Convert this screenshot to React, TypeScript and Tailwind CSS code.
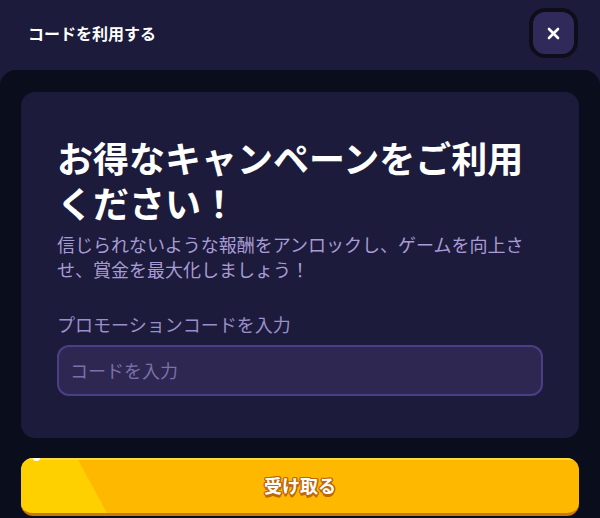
import React from "react";

export default function App() {
  return (
    <div className="w-[600px] h-[518px] bg-[#1c1b3b] flex flex-col overflow-hidden font-['Noto_Sans_CJK_JP','Noto_Sans',sans-serif]">
      <header className="h-[70px] shrink-0 flex items-center justify-between pl-7 pr-[22px] pb-1">
        <h2 className="text-base font-bold text-white leading-none">コードを利用する</h2>
        <button className="w-[49px] h-[50px] rounded-[16px] bg-[#2f2a5a] border-4 border-[#0e0e1a] flex items-center justify-center">
          <svg width="13" height="13" viewBox="0 0 13 13" fill="none">
            <path d="M2 2 L11 11 M11 2 L2 11" stroke="#ffffff" strokeWidth="2.6" strokeLinecap="round" />
          </svg>
        </button>
      </header>
      <main className="flex-1 bg-[#0a0d1c] rounded-t-2xl px-[21px] pt-[22px] flex flex-col gap-5">
        <section className="bg-[#1c1b3b] rounded-[14px] px-9 pt-[43px] pb-[42px] flex flex-col">
          <h1 className="text-[36px] leading-[45px] font-bold text-white">
            お得なキャンペーンをご利用ください！
          </h1>
          <p className="mt-[7px] text-[18px] leading-[25px] text-[#a99bd6]">
            信じられないような報酬をアンロックし、ゲームを向上さ<br />せ、賞金を最大化しましょう！
          </p>
          <label className="mt-[30px] text-[18px] leading-[25px] text-[#9b8fcb]">プロモーションコードを入力</label>
          <div className="mt-[8px] h-[51px] rounded-xl bg-[#2e2752] border-2 border-[#4a3f85] flex items-center px-[11px]">
            <span className="text-[18px] text-[#7b70a8]">コードを入力</span>
          </div>
        </section>
        <button className="relative h-[58px] shrink-0 rounded-xl bg-[#ffb800] border-b-[3px] border-[#c8770c] overflow-hidden flex items-center justify-center">
          <div className="absolute left-0 top-0 bottom-0 w-[90px] bg-[#ffd000] [clip-path:polygon(0_0,56px_0,86px_100%,0_100%)]" />
          <div className="absolute left-0 top-0 right-0 h-[2px] bg-[#ffdc3c]" />
          <div className="absolute left-3 top-0 w-[7px] h-[3px] bg-white rounded-b-sm" />
          <span className="relative text-[18px] font-bold text-white [text-shadow:1.5px_0_0_#c0650a,-1.5px_0_0_#c0650a,0_1.5px_0_#c0650a,0_-1.5px_0_#c0650a,1px_1px_0_#c0650a,-1px_-1px_0_#c0650a,1px_-1px_0_#c0650a,-1px_1px_0_#c0650a,0_2.5px_0_#c0650a]">
            受け取る
          </span>
        </button>
      </main>
    </div>
  );
}
